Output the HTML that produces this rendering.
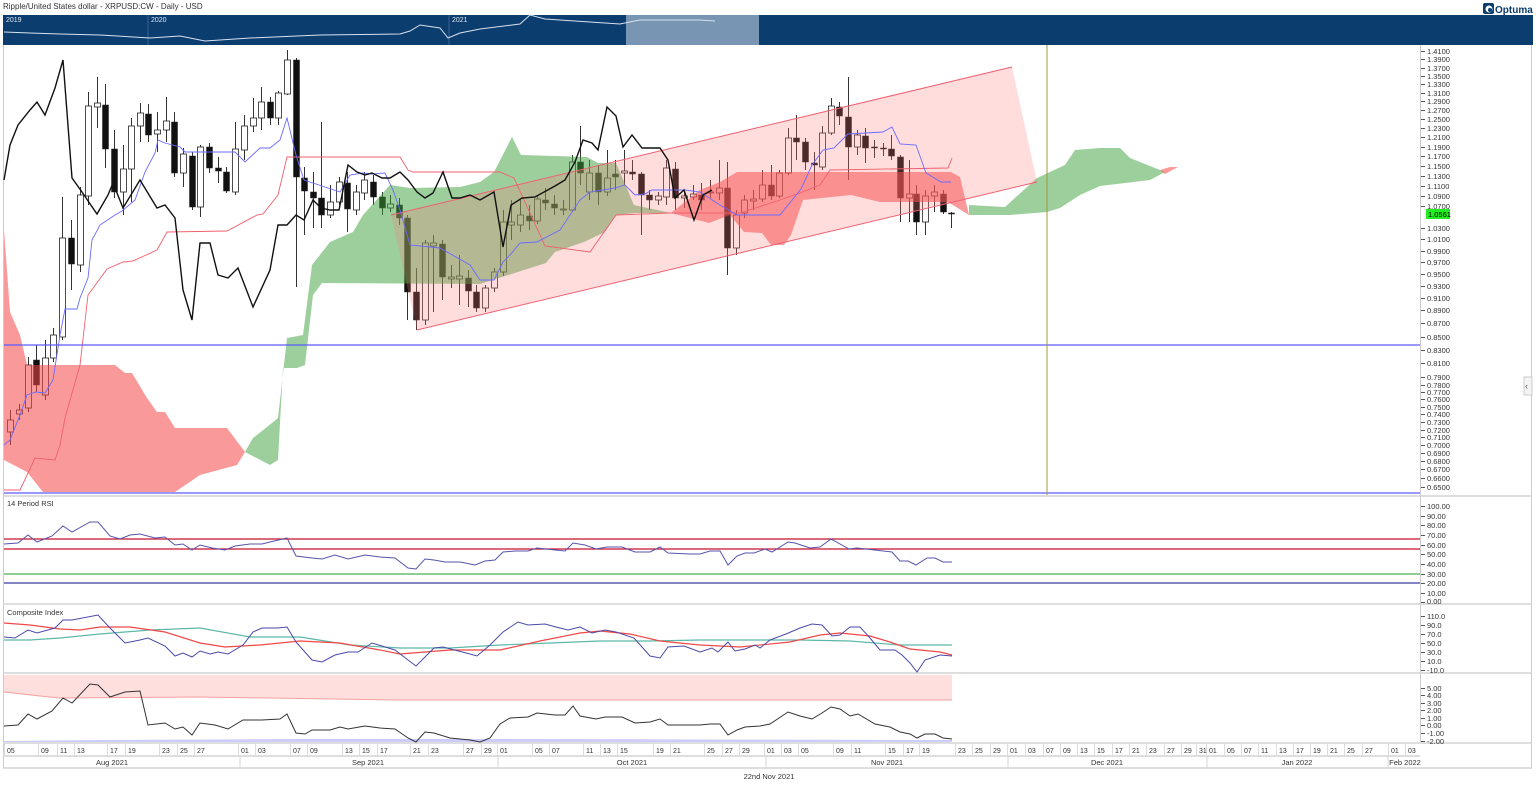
<!DOCTYPE html>
<html><head><meta charset="utf-8"><style>
html,body{margin:0;padding:0;background:#fff;}
svg{display:block;font-family:"Liberation Sans",sans-serif;}
</style></head><body>
<svg id="s" width="1536" height="788" viewBox="0 0 1536 788" xmlns="http://www.w3.org/2000/svg">
<rect x="0" y="0" width="1536" height="788" fill="#fff"/>
<text x="3" y="9" font-size="8" fill="#333">Ripple/United States dollar - XRPUSD:CW - Daily - USD</text>
<!-- logo -->
<g>
<rect x="1483" y="3" width="11" height="11" rx="2" fill="#0b3d6f"/>
<circle cx="1489" cy="9" r="3.5" fill="#fff"/><circle cx="1490" cy="10" r="2" fill="#0b3d6f"/>
<text x="1495" y="13" font-size="10" fill="#0b3d6f" font-weight="bold">Optuma</text>
</g>
<!-- navigator -->
<rect x="3" y="15" width="1530" height="30" fill="#0b3d6f"/>
<rect x="626" y="15" width="133" height="30" fill="#7895b3"/>
<line x1="148" y1="15" x2="148" y2="45" stroke="#3c6391" stroke-width="1"/>
<line x1="449" y1="15" x2="449" y2="45" stroke="#3c6391" stroke-width="1"/>
<text x="6" y="22" font-size="7" fill="#dfe8f2">2019</text>
<text x="151" y="22" font-size="7" fill="#dfe8f2">2020</text>
<text x="452" y="22" font-size="7" fill="#dfe8f2">2021</text>
<polyline fill="none" stroke="#d8e2ee" stroke-width="1" points="4,32 30,33 60,34 100,35 150,38 180,36 205,41 250,38 320,35 400,34 410,31 420,25 440,28 448,38 460,33 480,29 520,24 530,15 545,19 560,20 590,22 620,24 640,20 700,20 715,21"/>
<!-- chart border/axis -->
<line x1="3.5" y1="45" x2="3.5" y2="768" stroke="#ccc"/>
<line x1="1420.5" y1="45" x2="1420.5" y2="742" stroke="#ccc"/>
<line x1="1531.5" y1="45" x2="1531.5" y2="768" stroke="#ccc"/>
<g id="main"></g>
<!-- horizontal/vertical lines -->
<line x1="4" y1="345" x2="1420" y2="345" stroke="#5a5aff" stroke-width="1.2"/>
<line x1="4" y1="493" x2="1420" y2="493" stroke="#5a5aff" stroke-width="1.2"/>
<line x1="1047" y1="45" x2="1047" y2="495" stroke="#a09a3a" stroke-width="1"/>
<!-- pane separators -->
<g stroke="#d4d4d4" stroke-width="1.5">
<line x1="3" y1="496" x2="1532" y2="496"/>
<line x1="3" y1="604" x2="1532" y2="604"/>
<line x1="3" y1="673" x2="1532" y2="673"/>
<line x1="3" y1="743" x2="1532" y2="743"/>
<line x1="3" y1="756" x2="1420" y2="756"/>
<line x1="3" y1="768" x2="1532" y2="768"/>
</g>
<text x="7" y="506" font-size="7.5" fill="#333">14 Period RSI</text>
<text x="7" y="615" font-size="7.5" fill="#333">Composite Index</text>
<text x="7" y="685" font-size="7.5" fill="#333">Optex Bands</text>
<!-- RSI lines -->
<line x1="4" y1="539" x2="1420" y2="539" stroke="#c8102e" stroke-width="1.3"/>
<line x1="4" y1="549" x2="1420" y2="549" stroke="#c8102e" stroke-width="1.3"/>
<line x1="4" y1="574" x2="1420" y2="574" stroke="#4caf50" stroke-width="1.3"/>
<line x1="4" y1="583" x2="1420" y2="583" stroke="#3b3b9b" stroke-width="1.2"/>
<polyline fill="none" stroke="#5555aa" stroke-width="1" points="4,544 18,543 28,535 37,542 52,536 63,526 72,532 90,522 98,522 110,536 120,539 130,535 140,534 155,538 165,537 175,545 183,544 192,550 200,545 212,548 225,550 235,546 250,544 262,544 270,542 287,538 296,556 312,558 322,559 335,555 348,559 365,555 380,557 395,558 408,568 416,569 425,559 434,560 445,562 460,562 475,565 485,561 495,560 503,552 515,551 528,551 537,548 555,550 565,551 573,543 585,545 596,549 607,547 622,547 635,552 650,552 660,547 668,553 690,554 700,554 710,551 720,551 728,565 737,556 745,553 754,553 765,549 772,552 788,542 795,543 810,548 820,547 831,539 849,549 857,548 892,552 900,561 908,561 916,565 927,558 935,558 943,562 952,562"/>
<!-- Composite -->
<polyline fill="none" stroke="#5cb8a8" stroke-width="1.2" points="4,640 30,640 60,638 100,634 150,630 200,628 250,637 300,637 350,645 400,648 450,648 500,645 550,643 600,641 650,641 700,640 750,640 800,640 850,641 900,645 952,645"/>
<polyline fill="none" stroke="#f04848" stroke-width="1.2" points="4,623 30,625 60,629 80,630 100,627 130,627 165,632 200,643 225,647 260,645 300,641 340,643 380,650 400,654 450,650 500,650 540,641 580,633 600,631 630,634 660,641 700,645 740,647 790,642 820,635 840,633 870,636 890,642 910,649 940,652 952,655"/>
<polyline fill="none" stroke="#4a4aa8" stroke-width="1" points="4,637 15,638 28,630 37,633 55,628 63,620 72,620 98,615 110,628 125,643 140,640 148,638 165,646 175,656 183,653 192,657 200,651 210,654 218,652 228,654 243,645 253,632 262,628 278,628 287,627 296,642 312,660 322,662 335,655 348,652 358,652 372,643 395,650 408,660 416,666 434,648 443,647 470,654 477,656 490,645 503,632 518,622 528,625 545,624 556,627 568,630 580,627 592,633 605,630 616,632 634,638 650,656 660,658 668,647 684,646 700,652 712,648 718,652 728,642 735,651 745,649 755,645 760,648 770,640 786,634 800,628 812,624 822,625 832,636 840,635 850,627 860,627 870,638 880,650 895,650 902,655 910,663 917,672 925,660 940,655 952,656"/>
<!-- Optex -->
<polygon fill="#ffdede" stroke="none" points="4,675 952,675 952,700 600,700 400,700 200,697 60,698 40,696 4,692"/>
<polyline fill="none" stroke="#f4a0a0" stroke-width="1" points="4,692 40,696 60,698 200,697 400,700 600,700 952,700"/>
<polygon fill="#ccccff" points="4,741 100,740 300,739 500,739 952,740 952,742 4,742"/>
<polyline fill="none" stroke="#333" stroke-width="1" points="4,726 18,725 28,714 37,719 52,711 63,698 72,703 90,684 98,685 110,697 125,692 140,691 148,725 165,723 175,729 183,727 192,735 200,723 215,725 228,729 243,720 262,720 280,719 287,714 296,733 305,734 312,730 330,730 340,727 348,729 365,726 380,728 395,729 408,738 416,742 425,732 434,733 450,738 470,740 480,742 490,738 500,724 510,718 528,717 537,713 555,715 565,715 573,706 580,716 596,719 605,717 622,717 635,723 650,722 660,719 668,725 700,725 710,724 720,724 728,735 737,730 745,727 760,726 770,724 788,712 800,716 812,719 822,713 831,707 840,709 850,716 858,714 875,724 890,727 900,732 910,734 917,738 925,734 935,734 943,738 952,739"/>
<g id="axis" font-size="7.5" fill="#333"></g>
<!-- price tag -->
<rect x="1426" y="209" width="24" height="10" fill="#22ee22"/>
<text x="1428" y="217" font-size="7.5" fill="#000">1.0561</text>
<!-- collapse tab -->
<rect x="1524" y="377" width="8" height="18" fill="#f4f4f4" stroke="#ccc"/>
<text x="1525" y="389" font-size="9" fill="#555">‹</text>
<!-- months -->
<g stroke="#d4d4d4"><line x1="240" y1="756" x2="240" y2="768"/><line x1="498" y1="756" x2="498" y2="768"/><line x1="766" y1="756" x2="766" y2="768"/><line x1="1008" y1="756" x2="1008" y2="768"/><line x1="1207" y1="756" x2="1207" y2="768"/><line x1="1388" y1="756" x2="1388" y2="768"/></g>
<g font-size="7.5" fill="#333" text-anchor="middle">
<text x="112" y="765">Aug 2021</text><text x="368" y="765">Sep 2021</text><text x="632" y="765">Oct 2021</text><text x="887" y="765">Nov 2021</text><text x="1107" y="765">Dec 2021</text><text x="1297" y="765">Jan 2022</text><text x="1405" y="765">Feb 2022</text>
<text x="769" y="779">22nd Nov 2021</text>
</g>
<g id="days" font-size="7" fill="#333">
<text x="7" y="753">05</text><text x="41" y="753">09</text><text x="60" y="753">11</text><text x="77" y="753">13</text><text x="110" y="753">17</text><text x="128" y="753">19</text><text x="162" y="753">23</text><text x="180" y="753">25</text><text x="197" y="753">27</text><text x="241" y="753">01</text><text x="258" y="753">03</text><text x="293" y="753">07</text><text x="310" y="753">09</text><text x="345" y="753">13</text><text x="362" y="753">15</text><text x="380" y="753">17</text><text x="413" y="753">21</text><text x="431" y="753">23</text><text x="466" y="753">27</text><text x="484" y="753">29</text><text x="500" y="753">01</text><text x="535" y="753">05</text><text x="552" y="753">07</text><text x="586" y="753">11</text><text x="603" y="753">13</text><text x="620" y="753">15</text><text x="656" y="753">19</text><text x="673" y="753">21</text><text x="707" y="753">25</text><text x="725" y="753">27</text><text x="742" y="753">29</text><text x="767" y="753">01</text><text x="784" y="753">03</text><text x="801" y="753">05</text><text x="836" y="753">09</text><text x="854" y="753">11</text><text x="888" y="753">15</text><text x="906" y="753">17</text><text x="922" y="753">19</text><text x="958" y="753">23</text><text x="975" y="753">25</text><text x="993" y="753">29</text><text x="1010" y="753">01</text><text x="1028" y="753">03</text><text x="1046" y="753">07</text><text x="1063" y="753">09</text><text x="1080" y="753">13</text><text x="1097" y="753">15</text><text x="1115" y="753">17</text><text x="1132" y="753">21</text><text x="1149" y="753">23</text><text x="1167" y="753">27</text><text x="1184" y="753">29</text><text x="1199" y="753">31</text><text x="1209" y="753">01</text><text x="1227" y="753">05</text><text x="1244" y="753">07</text><text x="1261" y="753">11</text><text x="1279" y="753">13</text><text x="1296" y="753">17</text><text x="1313" y="753">19</text><text x="1330" y="753">21</text><text x="1347" y="753">25</text><text x="1365" y="753">27</text><text x="1391" y="753">01</text><text x="1408" y="753">03</text>
</g>
<g font-size="7.5" fill="#333">
<text x="1427" y="54">1.4100</text><text x="1427" y="62">1.3900</text><text x="1427" y="71">1.3700</text><text x="1427" y="79">1.3500</text><text x="1427" y="87">1.3300</text><text x="1427" y="96">1.3100</text><text x="1427" y="104">1.2900</text><text x="1427" y="113">1.2700</text><text x="1427" y="122">1.2500</text><text x="1427" y="131">1.2300</text><text x="1427" y="140">1.2100</text><text x="1427" y="150">1.1900</text><text x="1427" y="159">1.1700</text><text x="1427" y="169">1.1500</text><text x="1427" y="179">1.1300</text><text x="1427" y="189">1.1100</text><text x="1427" y="199">1.0900</text><text x="1427" y="209">1.0700</text><text x="1427" y="231">1.0300</text><text x="1427" y="242">1.0100</text><text x="1427" y="254">0.9900</text><text x="1427" y="265">0.9700</text><text x="1427" y="277">0.9500</text><text x="1427" y="289">0.9300</text><text x="1427" y="301">0.9100</text><text x="1427" y="313">0.8900</text><text x="1427" y="326">0.8700</text><text x="1427" y="340">0.8500</text><text x="1427" y="353">0.8300</text><text x="1427" y="366">0.8100</text><text x="1427" y="380">0.7900</text><text x="1427" y="388">0.7800</text><text x="1427" y="395">0.7700</text><text x="1427" y="402">0.7600</text><text x="1427" y="410">0.7500</text><text x="1427" y="417">0.7400</text><text x="1427" y="425">0.7300</text><text x="1427" y="433">0.7200</text><text x="1427" y="440">0.7100</text><text x="1427" y="448">0.7000</text><text x="1427" y="456">0.6900</text><text x="1427" y="464">0.6800</text><text x="1427" y="472">0.6700</text><text x="1427" y="481">0.6600</text><text x="1427" y="490">0.6500</text>
<text x="1427" y="509">100.00</text><text x="1427" y="519">90.00</text><text x="1427" y="528">80.00</text><text x="1427" y="538">70.00</text><text x="1427" y="548">60.00</text><text x="1427" y="557">50.00</text><text x="1427" y="567">40.00</text><text x="1427" y="577">30.00</text><text x="1427" y="586">20.00</text><text x="1427" y="596">10.00</text><text x="1427" y="604">0.00</text>
<text x="1427" y="619">110.0</text><text x="1427" y="628">90.0</text><text x="1427" y="637">70.0</text><text x="1427" y="646">50.0</text><text x="1427" y="655">30.0</text><text x="1427" y="664">10.0</text><text x="1427" y="673">-10.0</text>
<text x="1427" y="691">5.00</text><text x="1427" y="698">4.00</text><text x="1427" y="706">3.00</text><text x="1427" y="713">2.00</text><text x="1427" y="721">1.00</text><text x="1427" y="728">0.00</text><text x="1427" y="736">-1.00</text><text x="1427" y="744">-2.00</text>
</g>
</svg>
<script>
(function(){
var NS="http://www.w3.org/2000/svg";
var main=document.getElementById("main");
function el(t,a){var e=document.createElementNS(NS,t);for(var k in a)e.setAttribute(k,a[k]);main.appendChild(e);return e;}
// candles: x, top, bottom, type, hi, lo
var C="10,420,432,w,410,445;19,410,414,w,404,420;28,365,408,w,357,412;36,360,385,b,345,392;45,358,395,w,340,400;53,335,358,w,328,362;62,238,337,w,197,340;71,238,264,b,220,290;80,195,265,w,187,272;88,106,196,w,92,205;97,103,107,w,77,128;105,105,149,b,84,168;114,149,192,b,130,198;123,169,192,w,145,215;131,126,169,w,118,202;140,113,126,w,103,142;148,114,135,b,104,142;157,130,134,w,112,152;166,121,130,w,97,142;174,122,173,b,112,177;183,154,173,w,148,187;192,156,207,b,152,210;200,147,207,w,145,217;209,147,168,b,143,173;218,168,171,b,157,183;226,172,191,b,167,193;235,149,192,w,122,195;244,126,150,w,115,160;253,118,126,w,98,132;261,102,118,w,87,130;270,102,118,b,97,125;278,93,118,w,91,125;287,60,94,w,50,95;296,60,177,b,58,287;304,178,191,b,167,235;313,192,198,b,172,228;321,198,215,b,122,228;330,202,215,w,185,218;339,182,202,w,177,205;347,183,209,b,172,232;356,192,210,w,185,215;364,180,193,w,172,200;373,182,197,b,175,205;382,197,208,b,192,215;390,204,208,w,195,212;399,205,218,b,198,225;407,218,292,b,215,320;416,292,320,b,268,330;425,243,320,w,240,325;433,243,246,w,235,312;442,244,277,b,240,300;451,277,279,w,265,288;459,276,279,w,255,305;468,278,291,b,270,307;476,292,308,b,285,312;485,288,308,w,285,312;494,272,288,w,268,292;503,222,272,w,210,276;511,222,225,w,200,240;520,215,225,w,200,232;529,216,221,b,205,230;537,199,221,w,195,224;545,200,203,b,188,210;554,204,208,b,195,215;563,209,210,w,200,215;572,162,210,w,155,212;580,162,173,b,126,185;589,173,192,w,160,200;598,173,192,b,165,205;607,178,192,w,150,196;615,174,177,b,160,190;624,171,173,w,150,185;632,172,174,b,160,180;641,174,195,b,172,235;649,195,200,b,190,210;658,196,200,w,192,205;666,168,197,w,160,205;675,169,198,b,162,210;684,196,198,w,190,208;693,194,197,w,185,200;701,195,200,b,183,210;710,192,193,w,180,198;719,188,193,w,160,200;727,188,248,b,162,275;736,215,248,w,210,255;744,200,213,w,195,218;753,199,201,w,190,210;762,185,199,w,170,202;771,185,196,b,165,200;779,173,196,w,170,198;788,138,173,w,128,175;796,138,142,b,115,160;805,142,162,b,138,170;814,163,165,b,152,190;822,133,167,w,126,170;831,106,133,w,98,135;839,107,116,b,102,125;848,117,147,b,77,180;857,135,147,w,130,155;865,136,148,b,128,163;874,147,148,b,140,158;883,148,149,b,143,156;891,149,156,b,135,160;900,157,198,b,155,222;909,194,198,w,160,222;916,194,222,b,185,235;925,196,222,w,190,235;934,192,196,w,185,212;943,194,212,b,190,214;951,213,214,b,212,228";
C.split(";").forEach(function(s){var p=s.split(",");var x=+p[0],t=+p[1],b=+p[2],w=p[3]=="w",h=+p[4],l=+p[5];
el("line",{x1:x+.5,y1:h,x2:x+.5,y2:l,stroke:"#333","stroke-width":1});
el("rect",{x:x-2.5,y:t,width:6,height:Math.max(1,b-t),fill:w?"#fff":"#111",stroke:"#222","stroke-width":w?0.8:0.5});});
// clouds
el("polygon",{fill:"rgb(245,70,70)","fill-opacity":"0.55",points:"4,230 10,312 20,335 27,365 115,365 125,373 132,373 147,398 157,412 165,412 175,428 227,428 245,452 237,465 200,475 175,492 43,492 27,472 4,460"});
el("polygon",{fill:"rgb(60,160,60)","fill-opacity":"0.5",points:"245,452 253,438 267,427 278,418 287,338 303,335 312,265 330,242 353,232 363,215 390,185 410,188 460,187 480,182 494,172 512,137 521,155 587,157 598,163 616,163 634,205 671,213 634,213 616,215 605,232 584,242 555,252 546,263 480,284 322,283 313,295 305,365 297,368 283,368 278,460 270,465"});
el("polygon",{fill:"rgb(245,70,70)","fill-opacity":"0.55",points:"671,213 700,190 720,182 737,172 951,172 960,177 969,215 948,202 880,202 851,195 803,200 791,235 784,245 771,245 762,233 744,232 730,215 709,223"});
el("polygon",{fill:"rgb(60,160,60)","fill-opacity":"0.5",points:"969,205 1005,207 1016,197 1037,178 1065,165 1075,150 1100,148 1120,148 1130,158 1150,166 1165,172 1150,180 1100,186 1080,195 1060,208 1047,212 1010,215 969,215"});
el("polygon",{fill:"rgb(245,70,70)","fill-opacity":"0.55",points:"1160,170 1170,167 1178,167 1165,174"});
// channel
el("polygon",{fill:"rgb(255,120,120)","fill-opacity":"0.25",points:"391,215 1012,67 1037,182 417,330"});
el("line",{x1:391,y1:215,x2:1012,y2:67,stroke:"#f06070","stroke-width":1});
el("line",{x1:417,y1:330,x2:1037,y2:182,stroke:"#f06070","stroke-width":1});
// lines
function pl(pts,c,w){el("polyline",{fill:"none",stroke:c,"stroke-width":w,points:pts});}
pl("4,490 20,490 35,458 55,460 60,445 65,418 80,365 88,295 107,269 123,262 133,261 157,250 167,232 227,231 257,215 263,214 278,195 287,157 400,157 408,170 413,172 500,172 514,178 545,246 590,252 616,215 670,213 740,213 780,200 800,193 820,185 830,170 948,168 952,158","#f06070",0.9);
pl("4,445 10,440 20,415 27,395 36,392 45,393 53,380 60,335 65,309 77,309 80,298 88,278 92,240 100,225 115,215 122,211 135,200 145,172 155,153 158,140 165,143 180,147 185,152 235,152 245,162 260,148 270,148 280,140 287,118 296,155 304,180 340,192 350,175 363,173 372,174 385,173 393,190 400,210 410,245 440,248 470,265 480,280 494,280 503,262 510,255 520,243 537,242 560,230 580,200 590,192 615,188 625,185 635,195 645,194 652,190 685,190 700,192 720,205 737,215 780,215 801,189 812,165 823,150 834,148 848,134 883,132 892,127 900,144 916,145 926,173 941,182 951,182","#6a6aff",0.9);
pl("4,180 10,145 18,125 30,110 37,102 45,115 55,88 63,60 72,178 82,192 97,214 108,195 113,183 123,208 140,180 157,208 165,205 175,218 183,290 192,320 200,243 210,243 218,275 228,278 238,268 253,307 270,270 278,225 287,225 296,215 304,220 313,200 321,208 330,210 339,210 348,165 357,172 365,175 372,173 382,178 390,178 400,172 408,180 417,192 425,198 433,193 443,172 452,198 460,198 470,195 480,200 494,192 503,247 511,205 522,198 535,197 555,186 565,180 575,162 583,140 592,143 598,150 607,107 616,116 623,147 632,135 642,148 660,148 668,160 675,198 684,190 694,220 703,195 712,190","#111",1.4);
// axis ticks
var ax=document.getElementById("axis");
[51,59,68,76,84,93,101,110,119,128,137,147,156,166,176,186,196,206,228,239,251,262,274,286,298,310,323,337,350,363,377,385,392,399,407,414,422,430,437,445,453,461,469,478,487,506,516,525,535,545,554,564,574,583,593,602,616,625,634,643,652,661,670,688,695,703,710,718,725,733,741].forEach(function(y){var l=document.createElementNS(NS,"line");l.setAttribute("x1",1421);l.setAttribute("x2",1425);l.setAttribute("y1",y+.5);l.setAttribute("y2",y+.5);l.setAttribute("stroke","#555");ax.appendChild(l);});
var ds=document.getElementById("days").getElementsByTagName("text");
for(var i=0;i<ds.length;i++){var x=+ds[i].getAttribute("x")-2.5;var l=document.createElementNS(NS,"line");l.setAttribute("x1",x);l.setAttribute("x2",x);l.setAttribute("y1",744);l.setAttribute("y2",756);l.setAttribute("stroke","#ddd");ax.appendChild(l);}
})();
</script>
</body></html>
